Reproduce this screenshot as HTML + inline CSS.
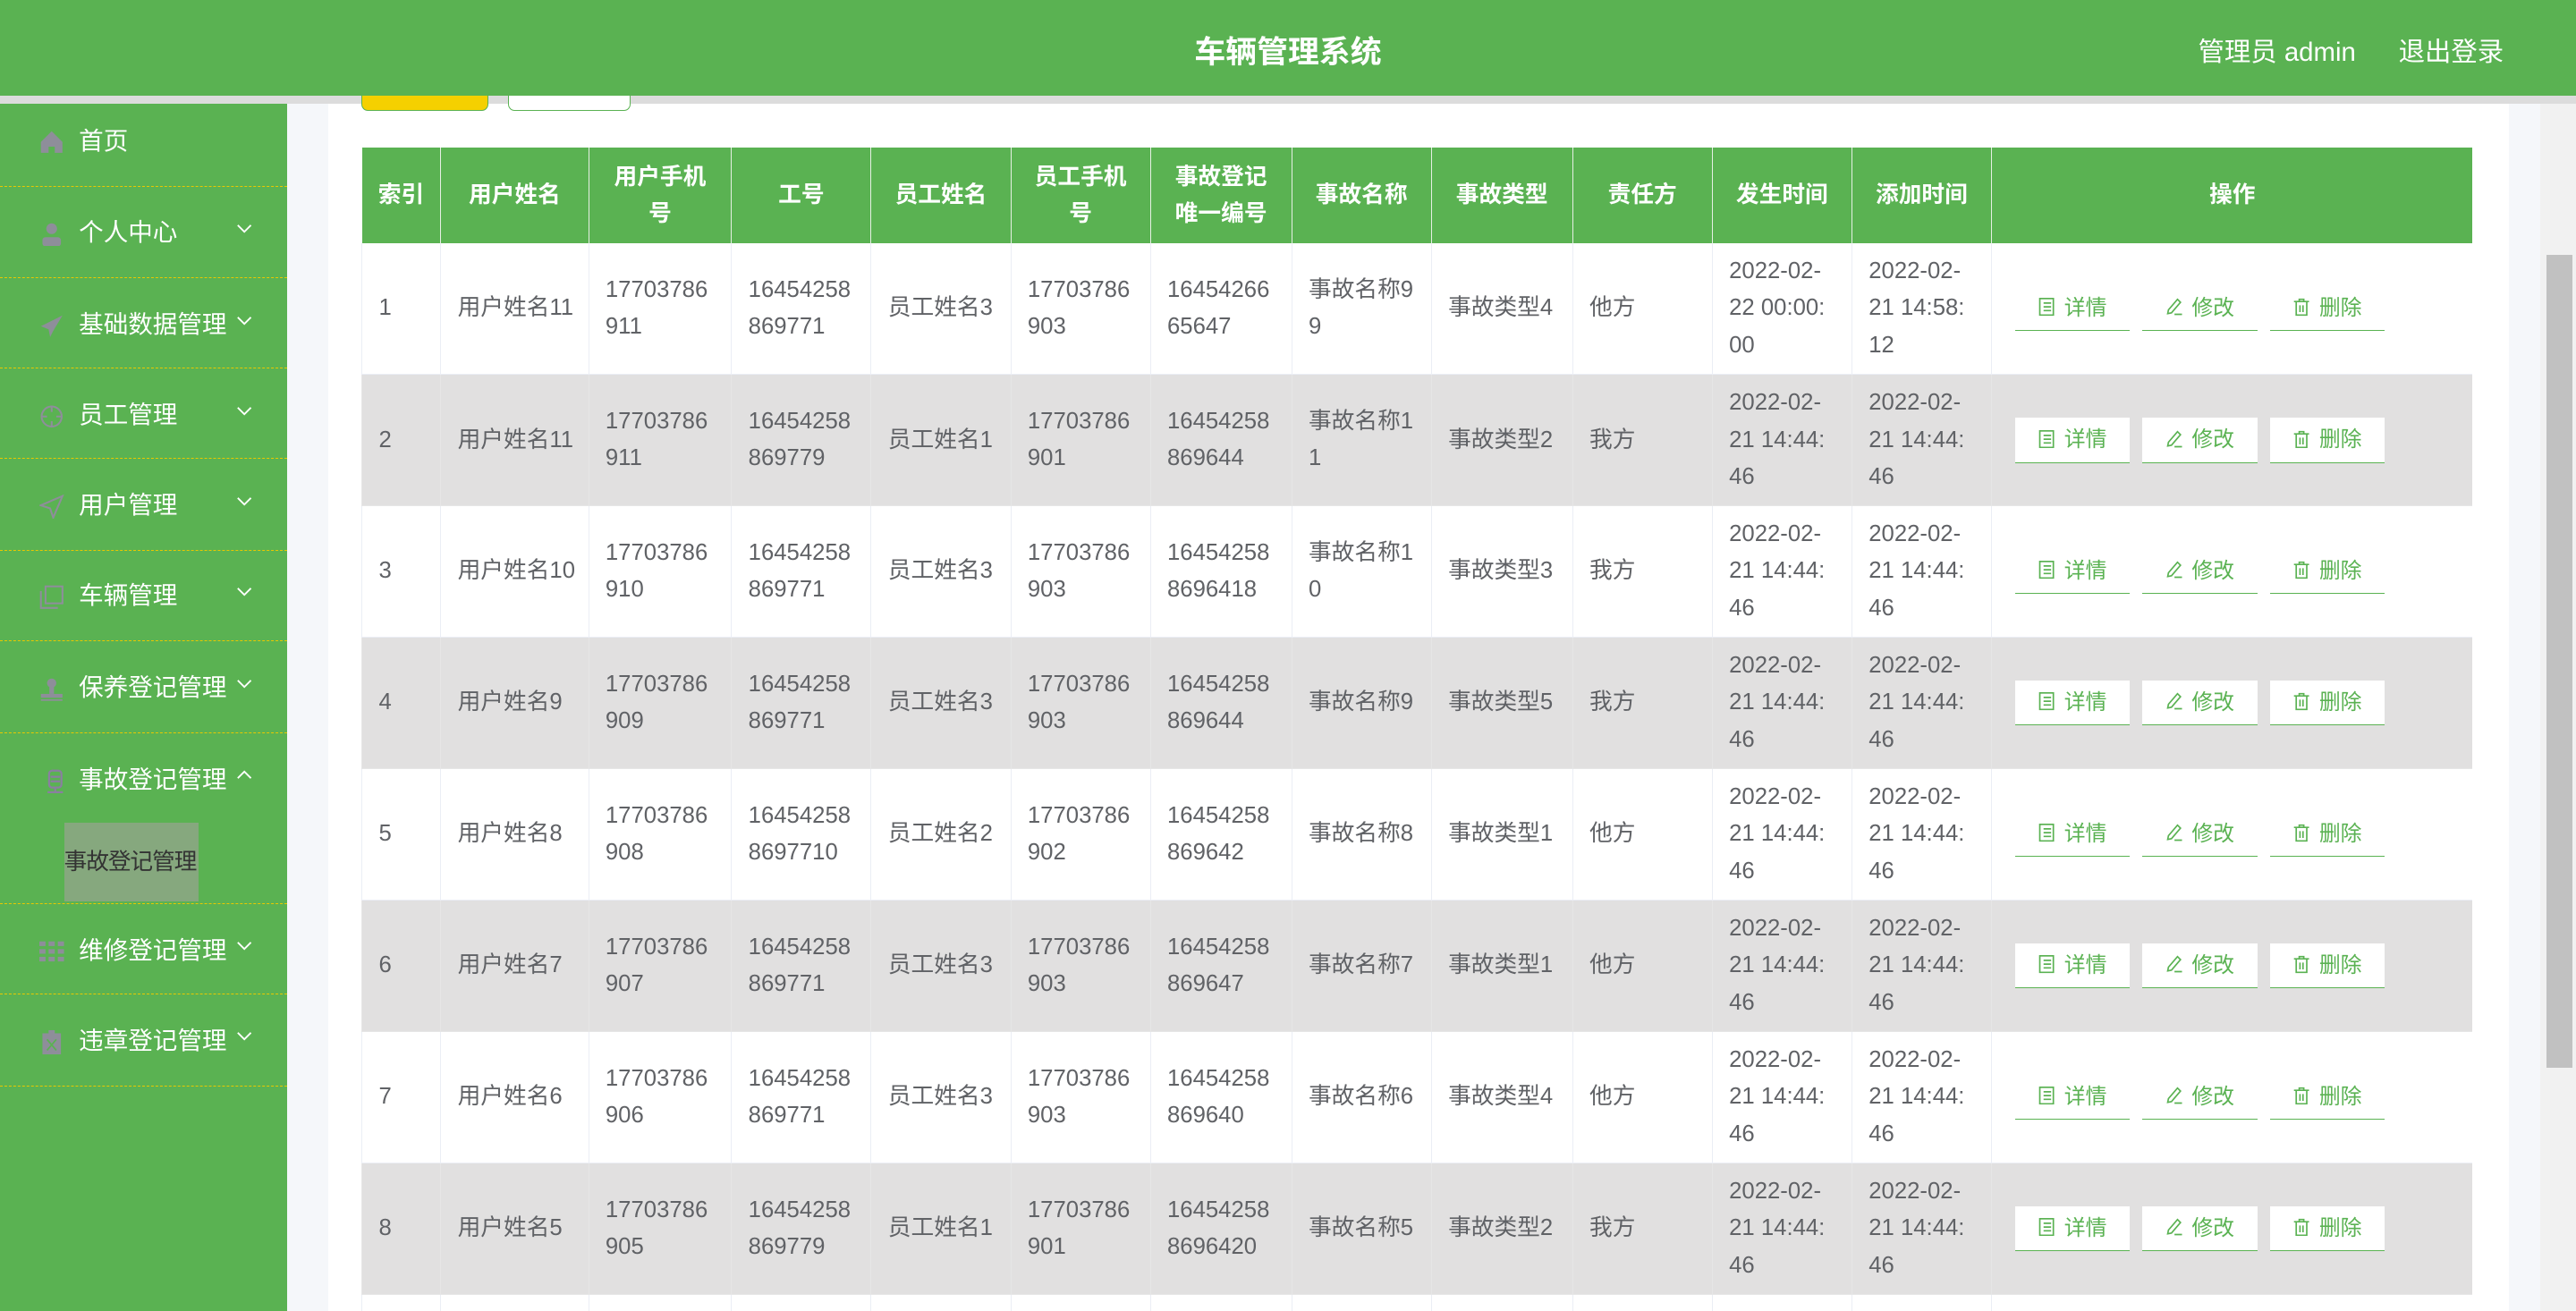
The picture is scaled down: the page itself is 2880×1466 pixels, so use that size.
<!DOCTYPE html>
<html><head><meta charset="utf-8">
<style>
html,body{margin:0;padding:0;width:2880px;height:1466px;overflow:hidden;background:#f5f7fa;}
#w{zoom:1.836735;width:1568px;height:798px;position:relative;overflow:hidden;font-family:"Liberation Sans","Noto Sans CJK SC",sans-serif;background:#f5f7fa;}
.hd{position:absolute;left:0;top:0;width:1568px;height:58px;background:#5ab252;color:#fff;}
.hd .t{position:absolute;left:0;width:1568px;text-align:center;top:17px;font-size:19px;font-weight:bold;}
.hd .u{position:absolute;left:1338px;top:19px;font-size:16px;}
.hd .o{position:absolute;left:1460px;top:19px;font-size:16px;}
.strip{position:absolute;left:0;top:58px;width:1568px;height:5px;background:#dcdcdc;}
.sb{position:absolute;left:0;top:63px;width:175px;height:735px;background:#5ab252;}
.it{position:absolute;left:0;width:175px;height:20px;color:#fff;font-size:15px;line-height:20px;}
.it .tx{position:absolute;left:48px;top:0;white-space:nowrap;}
.it .ic{position:absolute;left:24px;width:15px;height:15px;}
.it .ch{position:absolute;left:144px;top:4px;width:10px;height:6px;}
.ln{position:absolute;left:0;width:175px;border-top:1px dashed #e8c800;height:0;}
.sub{position:absolute;left:39px;top:501px;width:82px;height:48px;background:#86a87e;color:#333;font-size:14px;line-height:48px;white-space:nowrap;overflow:visible;letter-spacing:-0.6px;}
.card{position:absolute;left:200px;top:63px;width:1327px;height:735px;background:#fff;}
.b1{position:absolute;left:220px;top:58px;width:76px;height:9px;background:#f5d000;border:1px solid #5ab252;border-top:none;border-radius:0 0 4px 4px;}
.b2{position:absolute;left:309px;top:58px;width:74px;height:9px;background:#fff;border:1px solid #5ab252;border-top:none;border-radius:0 0 4px 4px;}
table{position:absolute;left:220px;top:90px;border-collapse:collapse;table-layout:fixed;width:1285px;}
th{background:#5ab252;color:#fff;font-size:14px;font-weight:bold;height:58px;line-height:22px;text-align:center;border-left:1px solid #e6efe4;padding:0;box-sizing:border-box;white-space:nowrap;}
th:first-child{border-left:none}
td{height:80px;font-size:14px;color:#606266;line-height:22.5px;padding:0 0 0 10px;border-left:1px solid #ebeef5;border-bottom:1px solid #ebeef5;box-sizing:border-box;vertical-align:middle;white-space:nowrap;}
tr.g td{background:#e1e0e0;border-color:#e6e6e6;}
.op{padding:0 0 0 14px;}
.bt{display:inline-block;width:70px;height:27px;line-height:27px;text-align:center;color:#5ab252;font-size:13px;border-bottom:1px solid #5ab252;margin-right:7.6px;background:transparent;}
.bt svg{width:11px;height:11px;vertical-align:-1px;margin-right:5px;}
tr.g .bt{background:#fff;}
.sc{position:absolute;left:1546px;top:63px;width:22px;height:735px;background:#f1f1f1;}
.th2{position:absolute;left:1550px;top:155px;width:16px;height:495px;background:#c1c1c1;}
.main-bg{position:absolute;left:175px;top:63px;width:1371px;height:735px;background:#f5f7fa;}
.tw{position:absolute;left:220px;top:90px;width:1285px;height:708px;overflow:hidden;}
.tw table{left:0;top:0;}
</style></head><body><div id="w">
<svg width="0" height="0" style="position:absolute"><defs>
<symbol id="d" viewBox="0 0 12 12"><rect x="1.5" y="0.5" width="9" height="11" fill="none" stroke="#5ab252"/><path d="M4 3.5h5M4 6h5M4 8.5h5" stroke="#5ab252"/></symbol>
<symbol id="e" viewBox="0 0 12 12"><path d="M8 1l2 2-6 7-2.5.5.5-2.5z M6 11h5" fill="none" stroke="#5ab252"/></symbol>
<symbol id="x" viewBox="0 0 12 12"><path d="M1 2.5h10M4.5 2.5V1h3v1.5M2.5 2.5v9h7v-9M5 5v4.5M7 5v4.5" fill="none" stroke="#5ab252"/></symbol>
<symbol id="cd" viewBox="0 0 10 6"><path d="M1 1l4 4 4-4" fill="none" stroke="#fff" stroke-width="1"/></symbol>
<symbol id="cu" viewBox="0 0 10 6"><path d="M1 5l4-4 4 4" fill="none" stroke="#fff" stroke-width="1"/></symbol>
</defs></svg>
<div class="hd"><div class="t">车辆管理系统</div><div class="u">管理员 admin</div><div class="o">退出登录</div></div>
<div class="strip"></div>
<div class="main-bg"></div>
<div class="card"></div>
<div class="b1"></div><div class="b2"></div>
<div class="sc"></div><div class="th2"></div>
<div class="sb"></div>
<div class="it" style="top:76px"><svg class="ic" style="top:3px" viewBox="0 0 16 16"><path d="M8 1L1 8v7h5v-4h4v4h5V8z" fill="#8e8e9a"/></svg><span class="tx">首页</span></div>
<div class="ln" style="top:113px"></div>
<div class="it" style="top:132px"><svg class="ic" style="top:3px" viewBox="0 0 16 16"><circle cx="8" cy="4.5" r="3.5" fill="#8e8e9a"/><rect x="2" y="10" width="12" height="6" rx="2" fill="#8e8e9a"/></svg><span class="tx">个人中心</span><svg class="ch"><use href="#cd"/></svg></div>
<div class="ln" style="top:169px"></div>
<div class="it" style="top:188px"><svg class="ic" style="top:3px" viewBox="0 0 16 16"><path d="M15 1L1 8l5 2 1 5 2-4z" fill="#8e8e9a"/></svg><span class="tx">基础数据管理</span><svg class="ch"><use href="#cd"/></svg></div>
<div class="ln" style="top:224px"></div>
<div class="it" style="top:243px"><svg class="ic" style="top:3px" viewBox="0 0 16 16"><circle cx="8" cy="8" r="6.5" fill="none" stroke="#8e8e9a" stroke-width="1.2"/><path d="M8 1v4M8 11v4M1 8h4M11 8h4" stroke="#8e8e9a" stroke-width="1.2"/></svg><span class="tx">员工管理</span><svg class="ch"><use href="#cd"/></svg></div>
<div class="ln" style="top:279px"></div>
<div class="it" style="top:298px"><svg class="ic" style="top:3px" viewBox="0 0 16 16"><path d="M15 1L1 7l6 2 2 6z" fill="none" stroke="#8e8e9a" stroke-width="1.2"/></svg><span class="tx">用户管理</span><svg class="ch"><use href="#cd"/></svg></div>
<div class="ln" style="top:335px"></div>
<div class="it" style="top:353px"><svg class="ic" style="top:3px" viewBox="0 0 16 16"><rect x="4" y="1" width="11" height="11" fill="none" stroke="#8e8e9a" stroke-width="1.2"/><path d="M1 4v11h11" fill="none" stroke="#8e8e9a" stroke-width="1.2"/></svg><span class="tx">车辆管理</span><svg class="ch"><use href="#cd"/></svg></div>
<div class="ln" style="top:390px"></div>
<div class="it" style="top:409px"><svg class="ic" style="top:3px" viewBox="0 0 16 16"><circle cx="8" cy="4" r="3" fill="#8e8e9a"/><rect x="6.5" y="6" width="3" height="5" fill="#8e8e9a"/><rect x="1" y="11" width="14" height="2.5" fill="#8e8e9a"/><rect x="1" y="14.5" width="14" height="1" fill="#8e8e9a"/></svg><span class="tx">保养登记管理</span><svg class="ch"><use href="#cd"/></svg></div>
<div class="ln" style="top:446px"></div>
<div class="it" style="top:465px"><svg class="ic" style="top:3px;left:26px" viewBox="0 0 16 16"><rect x="4" y="1" width="8" height="11" rx="2" fill="none" stroke="#8a7fa0" stroke-width="1.3"/><path d="M5 5h6M5 8h6M8 12v3M3 15h10" stroke="#8a7fa0" stroke-width="1.3"/></svg><span class="tx">事故登记管理</span><svg class="ch"><use href="#cu"/></svg></div>
<div class="sub">事故登记管理</div>
<div class="ln" style="top:550px"></div>
<div class="it" style="top:569px"><svg class="ic" style="top:3px" viewBox="0 0 16 16" fill="#8e8e9a"><rect x="0" y="1" width="4" height="3"/><rect x="6" y="1" width="4" height="3"/><rect x="12" y="1" width="4" height="3"/><rect x="0" y="6" width="4" height="3"/><rect x="6" y="6" width="4" height="3"/><rect x="12" y="6" width="4" height="3"/><rect x="0" y="11" width="4" height="3"/><rect x="6" y="11" width="4" height="3"/><rect x="12" y="11" width="4" height="3"/></svg><span class="tx">维修登记管理</span><svg class="ch"><use href="#cd"/></svg></div>
<div class="ln" style="top:605px"></div>
<div class="it" style="top:624px"><svg class="ic" style="top:3px" viewBox="0 0 16 16"><rect x="2" y="2" width="12" height="14" fill="#8e8e9a"/><rect x="6" y="0" width="4" height="3" fill="#8e8e9a"/><path d="M5 6l6 7M11 6l-6 7" stroke="#5ab252" stroke-width="1"/></svg><span class="tx">违章登记管理</span><svg class="ch"><use href="#cd"/></svg></div>
<div class="ln" style="top:661px"></div>

<div class="tw"><table>
<colgroup><col style="width:48px"><col style="width:90px"><col style="width:87px"><col style="width:85px"><col style="width:85px"><col style="width:85px"><col style="width:86px"><col style="width:85px"><col style="width:86px"><col style="width:85px"><col style="width:85px"><col style="width:85px"><col style="width:293px"></colgroup>
<tr><th>索引</th><th>用户姓名</th><th>用户手机<br>号</th><th>工号</th><th>员工姓名</th><th>员工手机<br>号</th><th>事故登记<br>唯一编号</th><th>事故名称</th><th>事故类型</th><th>责任方</th><th>发生时间</th><th>添加时间</th><th>操作</th></tr>
<tr><td>1</td><td>用户姓名11</td><td>17703786<br>911</td><td>16454258<br>869771</td><td>员工姓名3</td><td>17703786<br>903</td><td>16454266<br>65647</td><td>事故名称9<br>9</td><td>事故类型4</td><td>他方</td><td>2022-02-<br>22 00:00:<br>00</td><td>2022-02-<br>21 14:58:<br>12</td><td class="op"><span class="bt"><svg><use href="#d"/></svg>详情</span><span class="bt"><svg><use href="#e"/></svg>修改</span><span class="bt"><svg><use href="#x"/></svg>删除</span></td></tr>
<tr class="g"><td>2</td><td>用户姓名11</td><td>17703786<br>911</td><td>16454258<br>869779</td><td>员工姓名1</td><td>17703786<br>901</td><td>16454258<br>869644</td><td>事故名称1<br>1</td><td>事故类型2</td><td>我方</td><td>2022-02-<br>21 14:44:<br>46</td><td>2022-02-<br>21 14:44:<br>46</td><td class="op"><span class="bt"><svg><use href="#d"/></svg>详情</span><span class="bt"><svg><use href="#e"/></svg>修改</span><span class="bt"><svg><use href="#x"/></svg>删除</span></td></tr>
<tr><td>3</td><td>用户姓名10</td><td>17703786<br>910</td><td>16454258<br>869771</td><td>员工姓名3</td><td>17703786<br>903</td><td>16454258<br>8696418</td><td>事故名称1<br>0</td><td>事故类型3</td><td>我方</td><td>2022-02-<br>21 14:44:<br>46</td><td>2022-02-<br>21 14:44:<br>46</td><td class="op"><span class="bt"><svg><use href="#d"/></svg>详情</span><span class="bt"><svg><use href="#e"/></svg>修改</span><span class="bt"><svg><use href="#x"/></svg>删除</span></td></tr>
<tr class="g"><td>4</td><td>用户姓名9</td><td>17703786<br>909</td><td>16454258<br>869771</td><td>员工姓名3</td><td>17703786<br>903</td><td>16454258<br>869644</td><td>事故名称9</td><td>事故类型5</td><td>我方</td><td>2022-02-<br>21 14:44:<br>46</td><td>2022-02-<br>21 14:44:<br>46</td><td class="op"><span class="bt"><svg><use href="#d"/></svg>详情</span><span class="bt"><svg><use href="#e"/></svg>修改</span><span class="bt"><svg><use href="#x"/></svg>删除</span></td></tr>
<tr><td>5</td><td>用户姓名8</td><td>17703786<br>908</td><td>16454258<br>8697710</td><td>员工姓名2</td><td>17703786<br>902</td><td>16454258<br>869642</td><td>事故名称8</td><td>事故类型1</td><td>他方</td><td>2022-02-<br>21 14:44:<br>46</td><td>2022-02-<br>21 14:44:<br>46</td><td class="op"><span class="bt"><svg><use href="#d"/></svg>详情</span><span class="bt"><svg><use href="#e"/></svg>修改</span><span class="bt"><svg><use href="#x"/></svg>删除</span></td></tr>
<tr class="g"><td>6</td><td>用户姓名7</td><td>17703786<br>907</td><td>16454258<br>869771</td><td>员工姓名3</td><td>17703786<br>903</td><td>16454258<br>869647</td><td>事故名称7</td><td>事故类型1</td><td>他方</td><td>2022-02-<br>21 14:44:<br>46</td><td>2022-02-<br>21 14:44:<br>46</td><td class="op"><span class="bt"><svg><use href="#d"/></svg>详情</span><span class="bt"><svg><use href="#e"/></svg>修改</span><span class="bt"><svg><use href="#x"/></svg>删除</span></td></tr>
<tr><td>7</td><td>用户姓名6</td><td>17703786<br>906</td><td>16454258<br>869771</td><td>员工姓名3</td><td>17703786<br>903</td><td>16454258<br>869640</td><td>事故名称6</td><td>事故类型4</td><td>他方</td><td>2022-02-<br>21 14:44:<br>46</td><td>2022-02-<br>21 14:44:<br>46</td><td class="op"><span class="bt"><svg><use href="#d"/></svg>详情</span><span class="bt"><svg><use href="#e"/></svg>修改</span><span class="bt"><svg><use href="#x"/></svg>删除</span></td></tr>
<tr class="g"><td>8</td><td>用户姓名5</td><td>17703786<br>905</td><td>16454258<br>869779</td><td>员工姓名1</td><td>17703786<br>901</td><td>16454258<br>8696420</td><td>事故名称5</td><td>事故类型2</td><td>我方</td><td>2022-02-<br>21 14:44:<br>46</td><td>2022-02-<br>21 14:44:<br>46</td><td class="op"><span class="bt"><svg><use href="#d"/></svg>详情</span><span class="bt"><svg><use href="#e"/></svg>修改</span><span class="bt"><svg><use href="#x"/></svg>删除</span></td></tr>
<tr><td>9</td><td>用户姓名4</td><td>17703786<br>904</td><td>16454258<br>869771</td><td>员工姓名3</td><td>17703786<br>903</td><td>16454258<br>869641</td><td>事故名称4</td><td>事故类型1</td><td>他方</td><td>2022-02-<br>21 14:44:<br>46</td><td>2022-02-<br>21 14:44:<br>46</td><td class="op"></td></tr>
</table></div>
</div></body></html>
